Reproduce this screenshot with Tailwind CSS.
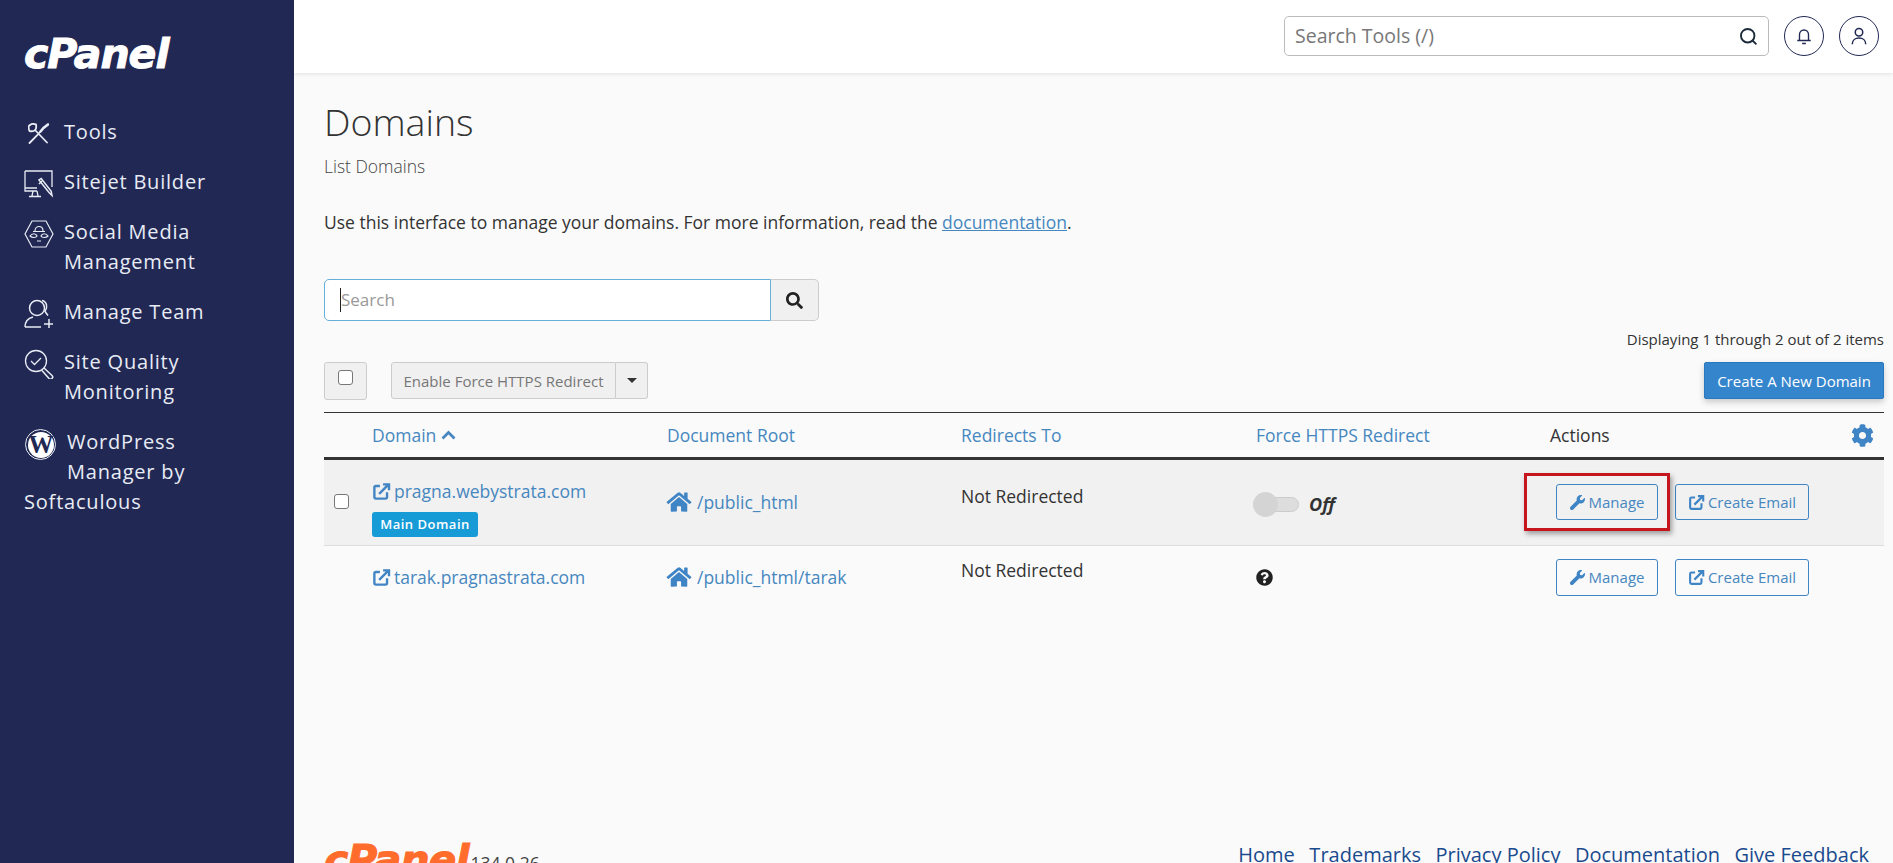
<!DOCTYPE html>
<html lang="en">
<head>
    <meta charset="UTF-8">
    <title>Domains - cPanel</title>
    <script src="https://cdn.jsdelivr.net/npm/@tailwindcss/browser@4"></script>
</head>
<body class="h-screen overflow-hidden flex bg-[#fafafa] text-[#333] font-['Open_Sans',sans-serif]">

    <!-- Sidebar -->
    <aside class="w-[294px] shrink-0 bg-[#212854] text-[#e8ecf4] text-[20px] leading-[30px] tracking-[0.8px]">
        <div class="pl-[24px] pt-[30px] h-[117px]">
            <span class="block text-white text-[41px] leading-[48px] font-bold italic tracking-[-1px] [-webkit-text-stroke:1px_white] font-['DejaVu_Sans',sans-serif]">cPanel</span>
        </div>
        <nav class="flex flex-col pl-[24px]">
            <a class="flex items-start gap-[15px] h-[50px]">
                <svg class="ml-[4px] w-[21px] h-[21px] mt-[6px]" viewBox="0 0 21 21" fill="none" stroke="#e8ecf4" stroke-width="1.800" stroke-linecap="round"><path d="M7 7 19 19.500M8 1.500Q9.500 9.500 1.500 8M1.500 8Q-.5 3 2 2M8 1.500Q4 0 2 2M11.500 9.500 9.500 12 1.500 20"/><path d="M20 1.500 15.500 5 12.500 8.500" stroke-width="2.600"/></svg>
                <span>Tools</span>
            </a>
            <a class="flex items-start gap-[11px] h-[50px]">
                <svg class="w-[29px] h-[28px] mt-[3px]" viewBox="0 0 29 28" fill="none" stroke="#e8ecf4" stroke-width="1.300"><path d="M1 1h27v16M13 21H1V1M1 18h12M9 21l-1 5M5 26.500h12M13 21l1 5"/><path d="M15 10l10 12.500 3 3-.8-4.200-10-12.800zM15 14l3-3" stroke-width="1.500"/></svg>
                <span>Sitejet Builder</span>
            </a>
            <a class="flex items-start gap-[10px] h-[80px]">
                <svg class="w-[30px] h-[28px] mt-[3px]" viewBox="0 0 30 28" fill="none" stroke="#e8ecf4" stroke-width="1.200"><path d="M1 14 8 1h14l7 13-7 13H8z"/><path d="M11 11c0-6 8-6 8 0M9 11.500h12M6 16c2-3 6-3 7 0-1 2-5 2-7 0zM17 16c1-3 5-3 7 0-2 2-6 2-7 0zM13 21h4"/></svg>
                <span>Social Media<br>Management</span>
            </a>
            <a class="flex items-start gap-[10px] h-[50px]">
                <svg class="w-[30px] h-[30px] mt-[2px]" viewBox="0 0 30 30" fill="none" stroke="#e8ecf4" stroke-width="1.500"><circle cx="13" cy="9" r="7.500"/><path d="M18 1.500c5 1 6 7 3 11l3 4M1 28c0-6 4-9 8-10M1 28h16M20 25h9M25 20v9"/></svg>
                <span>Manage Team</span>
            </a>
            <a class="flex items-start gap-[10px] h-[80px]">
                <svg class="w-[30px] h-[30px] mt-[2px]" viewBox="0 0 30 30" fill="none" stroke="#e8ecf4" stroke-width="1.300"><circle cx="12" cy="12" r="10.500"/><path d="M7 12l3.500 3.500L17 9"/><path d="M20 19l8 7.500a2 2 0 0 1-3 3L18 21.500" stroke-width="1.500"/></svg>
                <span>Site Quality<br>Monitoring</span>
            </a>
            <div class="h-[90px]">
                <span class="inline-flex items-center justify-center align-top w-[31px] h-[31px] mt-[2px] mr-[11px] ml-[1px] rounded-full border border-[#e8ecf4] p-[1.500px]">
                    <span class="flex items-center justify-center w-full h-full rounded-full bg-white text-[#212854] text-[25px] leading-none font-bold tracking-[-1px] font-['Liberation_Serif',serif]">W</span>
                </span><span class="inline-block align-top">WordPress<br>Manager by</span>
                <span class="block">Softaculous</span>
            </div>
        </nav>
    </aside>

    <div class="flex-1 flex flex-col min-w-0">
        <!-- Top bar -->
        <header class="h-[73px] shrink-0 bg-white shadow-[0_1px_4px_rgba(0,0,0,0.1)] flex items-start justify-end pt-[16px] pr-[14px] gap-[15px]">
            <div class="w-[485px] h-[40px] border border-[#bbb] rounded-[5px] flex items-center justify-between pl-[10px] pr-[10px] text-[19.500px] text-[#777]">
                <span>Search Tools (/)</span>
                <svg class="w-[19px] h-[19px]" viewBox="0 0 24 24" fill="none" stroke="#1d2b3a" stroke-width="2.400"><circle cx="11" cy="11" r="8.500"/><path d="M17 17l5 5"/></svg>
            </div>
            <span class="w-[40px] h-[40px] rounded-full border border-[#212854] flex items-center justify-center">
                <svg class="w-[18px] h-[18px]" viewBox="0 0 24 24" fill="none" stroke="#212854" stroke-width="1.800"><path d="M6 18V10a6 6 0 0 1 12 0v8M3 18h18M9.500 22h5"/></svg>
            </span>
            <span class="w-[40px] h-[40px] rounded-full border border-[#212854] flex items-center justify-center">
                <svg class="w-[18px] h-[18px]" viewBox="0 0 24 24" fill="none" stroke="#212854" stroke-width="2"><circle cx="12" cy="7" r="5"/><path d="M3 23c0-11 18-11 18 0"/></svg>
            </span>
        </header>

        <main class="flex-1 min-h-0 pl-[30px] pr-[9px]">
            <h1 class="text-[37.500px] leading-[50px] font-light mt-[24px] text-[#333]">Domains</h1>
            <p class="text-[17.500px] leading-[24px] font-light mt-[7px] text-[#444]">List Domains</p>
            <p class="text-[17.500px] leading-[24px] mt-[32px]">Use this interface to manage your domains. For more information, read the <a class="text-[#4687bf] underline">documentation</a>.</p>

            <!-- Search -->
            <div class="flex mt-[45px] w-[495px] h-[42px]">
                <div class="flex-1 bg-white border border-[#66afd9] rounded-l-[5px] flex items-center pl-[15px] text-[17px] text-[#999]">
                    <span class="border-l border-[#222] leading-[24px]">Search</span>
                </div>
                <span class="w-[48px] bg-[#f0f0f0] border border-[#ccc] border-l-0 rounded-r-[5px] flex items-center justify-center">
                    <svg class="w-[17px] h-[17px]" viewBox="0 0 512 512" fill="#222"><path d="M505 442.700L405.300 343c-4.500-4.500-10.600-7-17-7H372c27.600-35.300 44-79.700 44-128C416 93.100 322.900 0 208 0S0 93.100 0 208s93.100 208 208 208c48.300 0 92.700-16.400 128-44v16.300c0 6.400 2.500 12.500 7 17l99.700 99.700c9.400 9.400 24.600 9.400 33.900 0l28.300-28.300c9.400-9.400 9.400-24.600.1-34zM208 336c-70.700 0-128-57.200-128-128 0-70.700 57.200-128 128-128 70.700 0 128 57.200 128 128 0 70.700-57.200 128-128 128z"/></svg>
                </span>
            </div>

            <p class="text-right text-[15px] leading-[20px] mt-[8px] text-[#333]">Displaying 1 through 2 out of 2 items</p>

            <!-- Toolbar -->
            <div class="flex items-start mt-[13px] h-[50px]">
                <span class="w-[43px] h-[38px] bg-[#f0f0f0] border border-[#ccc] rounded-[3px] flex justify-center pt-[7px]">
                    <span class="w-[15px] h-[15px] bg-white border border-[#777] rounded-[3px]"></span>
                </span>
                <span class="ml-[24px] h-[37px] w-[225px] bg-[#f0f0f0] border border-[#ccc] rounded-l-[3px] flex items-center justify-center text-[15px] text-[#777] pt-[2px]">Enable Force HTTPS Redirect</span>
                <span class="h-[37px] w-[32px] bg-[#f0f0f0] border border-[#ccc] border-l-0 rounded-r-[3px] flex items-center justify-center">
                    <span class="border-x-[5px] border-x-transparent border-t-[5px] border-t-[#333]"></span>
                </span>
                <span class="ml-auto h-[37px] w-[180px] bg-[#3585cd] border border-[#2a78bf] rounded-[2px] shadow-[0_3px_6px_rgba(0,0,0,0.2)] flex items-center justify-center text-[15px] text-white pt-[1px]">Create A New Domain</span>
            </div>

            <!-- Table -->
            <div class="grid grid-cols-[48px_295px_294px_295px_294px_1fr] items-center h-[48px] border-t border-[#333] border-b-[3px] border-b-[#333] text-[17.500px] text-[#4687bf]">
                <span></span>
                <span class="flex items-center gap-[5px]">Domain
                    <svg class="w-[15px] h-[10px]" viewBox="0 0 15 10" fill="none" stroke="#4687bf" stroke-width="2.800"><path d="M1.500 8.500 7.500 2.500l6 6"/></svg>
                </span>
                <span>Document Root</span>
                <span>Redirects To</span>
                <span>Force HTTPS Redirect</span>
                <span class="flex items-center justify-between pr-[10px] text-[#333]">Actions
                    <svg class="w-[23px] h-[23px]" viewBox="0 0 512 512" fill="#3f84c4"><path d="M487.400 315.700l-42.600-24.600c4.300-23.200 4.300-47 0-70.200l42.600-24.600c4.900-2.800 7.100-8.600 5.500-14-11.100-35.600-30-67.800-54.700-94.600-3.800-4.100-10-5.100-14.800-2.300L380.800 110c-17.900-15.400-38.500-27.300-60.800-35.100V25.800c0-5.600-3.900-10.500-9.400-11.700-36.700-8.200-74.300-7.800-109.200 0-5.500 1.200-9.400 6.100-9.400 11.700V75c-22.200 7.900-42.800 19.800-60.800 35.100L88.700 85.500c-4.900-2.800-11-1.900-14.800 2.300-24.700 26.700-43.600 58.900-54.700 94.600-1.700 5.400.6 11.200 5.500 14L67.300 221c-4.300 23.200-4.300 47 0 70.200l-42.600 24.600c-4.900 2.800-7.100 8.600-5.500 14 11.100 35.600 30 67.800 54.700 94.600 3.800 4.100 10 5.100 14.800 2.300l42.600-24.600c17.900 15.400 38.500 27.300 60.800 35.100v49.200c0 5.600 3.900 10.500 9.400 11.700 36.700 8.200 74.300 7.800 109.200 0 5.500-1.200 9.400-6.100 9.400-11.700v-49.200c22.200-7.900 42.800-19.800 60.800-35.100l42.600 24.600c4.900 2.800 11 1.900 14.800-2.300 24.700-26.700 43.600-58.900 54.700-94.600 1.500-5.500-.7-11.300-5.600-14.100zM256 336c-44.100 0-80-35.900-80-80s35.900-80 80-80 80 35.900 80 80-35.900 80-80 80z"/></svg>
                </span>
            </div>

            <!-- Row 1 -->
            <div class="grid grid-cols-[48px_295px_294px_295px_294px_1fr] h-[86px] bg-[#f1f1f1] border-b border-[#ddd] text-[17.500px]">
                <span class="flex pl-[10px] pt-[34px]"><span class="w-[15px] h-[15px] bg-white border border-[#777] rounded-[3px]"></span></span>
                <div class="pt-[19px]">
                    <a class="flex items-center gap-[3px] h-[24px] text-[#4687bf]">
                        <svg class="w-[19px] h-[19px]" viewBox="0 0 24 24" fill="none" stroke="#4285c4" stroke-width="3"><path d="M10 5H5a2 2 0 0 0-2 2v12a2 2 0 0 0 2 2h12a2 2 0 0 0 2-2v-6M9 15 21 3M14 3h7.500v7.500"/></svg>
                        pragna.webystrata.com
                    </a>
                    <span class="inline-flex items-center justify-center mt-[9px] w-[106px] h-[25px] bg-[#179bd7] rounded-[3px] text-white text-[13px] font-semibold tracking-[0.5px]">Main Domain</span>
                </div>
                <a class="flex items-center gap-[5px] h-[24px] mt-[30px] ml-[-1px] text-[#4687bf]">
                    <svg class="w-[26px] h-[22px]" viewBox="0 0 576 512" fill="#3f84c4"><path d="M280.370 148.260L96 300.110V464a16 16 0 0 0 16 16l112.060-.29a16 16 0 0 0 15.920-16V368a16 16 0 0 1 16-16h64a16 16 0 0 1 16 16v95.640a16 16 0 0 0 16 16.050L464 480a16 16 0 0 0 16-16V300L295.670 148.260a12.190 12.190 0 0 0-15.300 0zM571.600 251.470L488 182.560V44.050a12 12 0 0 0-12-12h-56a12 12 0 0 0-12 12v72.610L318.470 43a48 48 0 0 0-61 0L4.340 251.470a12 12 0 0 0-1.600 16.900l25.500 31A12 12 0 0 0 45.150 301l235.220-193.740a12.190 12.190 0 0 1 15.300 0L530.900 301a12 12 0 0 0 16.900-1.600l25.500-31a12 12 0 0 0-1.700-16.930z"/></svg>
                    /public_html
                </a>
                <span class="pt-[24px] leading-[24px]">Not Redirected</span>
                <div class="flex items-center h-[25px] mt-[32px] ml-[-3px]">
                    <span class="relative w-[46px] h-[15px] bg-[#ddd] border border-[#ccc] rounded-full">
                        <span class="absolute left-[-1px] top-[-6px] w-[25px] h-[25px] rounded-full bg-[#d4d4d4]"></span>
                    </span>
                    <span class="ml-[10px] text-[18px] font-bold italic">Off</span>
                </div>
                <div class="relative flex items-start pt-[24px] pl-[6px] gap-[17px]">
                    <span class="absolute left-[-26px] top-[13px] w-[146px] h-[58px] border-[3px] border-[#c4161c] shadow-[2px_3px_5px_rgba(0,0,0,0.35)]"></span>
                    <a class="w-[102px] h-[36px] border border-[#3f84c4] rounded-[3px] flex items-center justify-center gap-[4px] text-[15px] text-[#4687bf]">
                        <svg class="w-[15px] h-[15px]" viewBox="0 0 512 512" fill="#3f84c4"><path d="M507.730 109.100c-2.240-9.030-13.540-12.090-20.120-5.510l-74.360 74.360-67.880-11.310-11.310-67.880 74.360-74.360c6.620-6.620 3.430-17.900-5.660-20.160-47.380-11.740-99.550.91-136.580 37.930-39.640 39.640-50.550 97.100-34.050 147.200L18.740 402.760c-24.990 24.990-24.990 65.510 0 90.500 24.990 24.990 65.510 24.990 90.500 0l213.210-213.210c50.120 16.710 107.470 5.680 147.370-34.220 37.070-37.070 49.700-89.320 37.910-136.730z"/></svg>
                        Manage
                    </a>
                    <a class="w-[134px] h-[36px] border border-[#3f84c4] rounded-[3px] flex items-center justify-center gap-[3px] text-[15px] text-[#4687bf]">
                        <svg class="w-[17px] h-[17px]" viewBox="0 0 24 24" fill="none" stroke="#3f84c4" stroke-width="3"><path d="M10 5H5a2 2 0 0 0-2 2v12a2 2 0 0 0 2 2h12a2 2 0 0 0 2-2v-6M9 15 21 3M14 3h7.500v7.500"/></svg>
                        Create Email
                    </a>
                </div>
            </div>

            <!-- Row 2 -->
            <div class="grid grid-cols-[48px_295px_294px_295px_294px_1fr] h-[65px] text-[17.500px]">
                <span></span>
                <a class="flex items-center gap-[3px] h-[24px] mt-[19px] text-[#4687bf]">
                    <svg class="w-[19px] h-[19px]" viewBox="0 0 24 24" fill="none" stroke="#4285c4" stroke-width="3"><path d="M10 5H5a2 2 0 0 0-2 2v12a2 2 0 0 0 2 2h12a2 2 0 0 0 2-2v-6M9 15 21 3M14 3h7.500v7.500"/></svg>
                    tarak.pragnastrata.com
                </a>
                <a class="flex items-center gap-[5px] h-[24px] mt-[19px] ml-[-1px] text-[#4687bf]">
                    <svg class="w-[26px] h-[22px]" viewBox="0 0 576 512" fill="#3f84c4"><path d="M280.370 148.260L96 300.110V464a16 16 0 0 0 16 16l112.060-.29a16 16 0 0 0 15.920-16V368a16 16 0 0 1 16-16h64a16 16 0 0 1 16 16v95.640a16 16 0 0 0 16 16.050L464 480a16 16 0 0 0 16-16V300L295.670 148.260a12.190 12.190 0 0 0-15.300 0zM571.600 251.470L488 182.560V44.050a12 12 0 0 0-12-12h-56a12 12 0 0 0-12 12v72.610L318.470 43a48 48 0 0 0-61 0L4.340 251.470a12 12 0 0 0-1.600 16.900l25.500 31A12 12 0 0 0 45.150 301l235.220-193.740a12.190 12.190 0 0 1 15.300 0L530.900 301a12 12 0 0 0 16.900-1.600l25.500-31a12 12 0 0 0-1.700-16.930z"/></svg>
                    /public_html/tarak
                </a>
                <span class="pt-[12px] leading-[24px]">Not Redirected</span>
                <div class="pt-[23px]">
                    <svg class="w-[17px] h-[17px]" viewBox="0 0 512 512" fill="#222"><path d="M504 256c0 136.997-111.043 248-248 248S8 392.997 8 256C8 119.083 119.043 8 256 8s248 111.083 248 248zM262.655 90c-54.497 0-89.255 22.957-116.549 63.758-3.536 5.286-2.353 12.415 2.715 16.258l34.699 26.310c5.205 3.947 12.621 3.008 16.665-2.122 17.864-22.658 30.113-35.797 57.303-35.797 20.429 0 45.698 13.148 45.698 32.958 0 14.976-12.363 22.667-32.534 33.976C247.128 238.528 216 254.941 216 296v4c0 6.627 5.373 12 12 12h56c6.627 0 12-5.373 12-12v-1.333c0-28.462 83.186-29.647 83.186-106.667 0-58.002-60.165-102-116.531-102zM256 338c-25.365 0-46 20.635-46 46 0 25.364 20.635 46 46 46s46-20.636 46-46c0-25.365-20.635-46-46-46z"/></svg>
                </div>
                <div class="flex items-start pt-[13px] pl-[6px] gap-[17px]">
                    <a class="w-[102px] h-[37px] border border-[#3f84c4] rounded-[3px] flex items-center justify-center gap-[4px] text-[15px] text-[#4687bf]">
                        <svg class="w-[15px] h-[15px]" viewBox="0 0 512 512" fill="#3f84c4"><path d="M507.730 109.100c-2.240-9.030-13.540-12.090-20.120-5.510l-74.360 74.360-67.880-11.310-11.310-67.880 74.360-74.360c6.620-6.620 3.430-17.900-5.660-20.160-47.380-11.740-99.550.91-136.580 37.930-39.640 39.640-50.550 97.100-34.050 147.200L18.740 402.760c-24.990 24.990-24.990 65.510 0 90.500 24.990 24.990 65.510 24.990 90.500 0l213.210-213.210c50.120 16.710 107.470 5.680 147.370-34.220 37.070-37.070 49.700-89.320 37.910-136.730z"/></svg>
                        Manage
                    </a>
                    <a class="w-[134px] h-[37px] border border-[#3f84c4] rounded-[3px] flex items-center justify-center gap-[3px] text-[15px] text-[#4687bf]">
                        <svg class="w-[17px] h-[17px]" viewBox="0 0 24 24" fill="none" stroke="#3f84c4" stroke-width="3"><path d="M10 5H5a2 2 0 0 0-2 2v12a2 2 0 0 0 2 2h12a2 2 0 0 0 2-2v-6M9 15 21 3M14 3h7.500v7.500"/></svg>
                        Create Email
                    </a>
                </div>
            </div>

            <!-- Footer, cut off by the window -->
            <footer class="flex justify-between items-start mt-[227px] pr-[15px]">
                <div class="flex items-start">
                    <span class="mt-[-2px] text-[#ff6c2c] text-[41px] leading-[48px] font-bold italic tracking-[-1px] [-webkit-text-stroke:1px_#ff6c2c] font-['DejaVu_Sans',sans-serif]">cPanel</span>
                    <span class="text-[17.500px] leading-[26px] ml-[2px] mt-[12px] text-[#444]">134.0.26</span>
                </div>
                <nav class="flex gap-[14.500px] mt-[2px] text-[20px] leading-[30px] text-[#1a4a8e]">
                    <a>Home</a><a>Trademarks</a><a>Privacy Policy</a><a>Documentation</a><a>Give Feedback</a>
                </nav>
            </footer>
        </main>
    </div>
</body>
</html>
